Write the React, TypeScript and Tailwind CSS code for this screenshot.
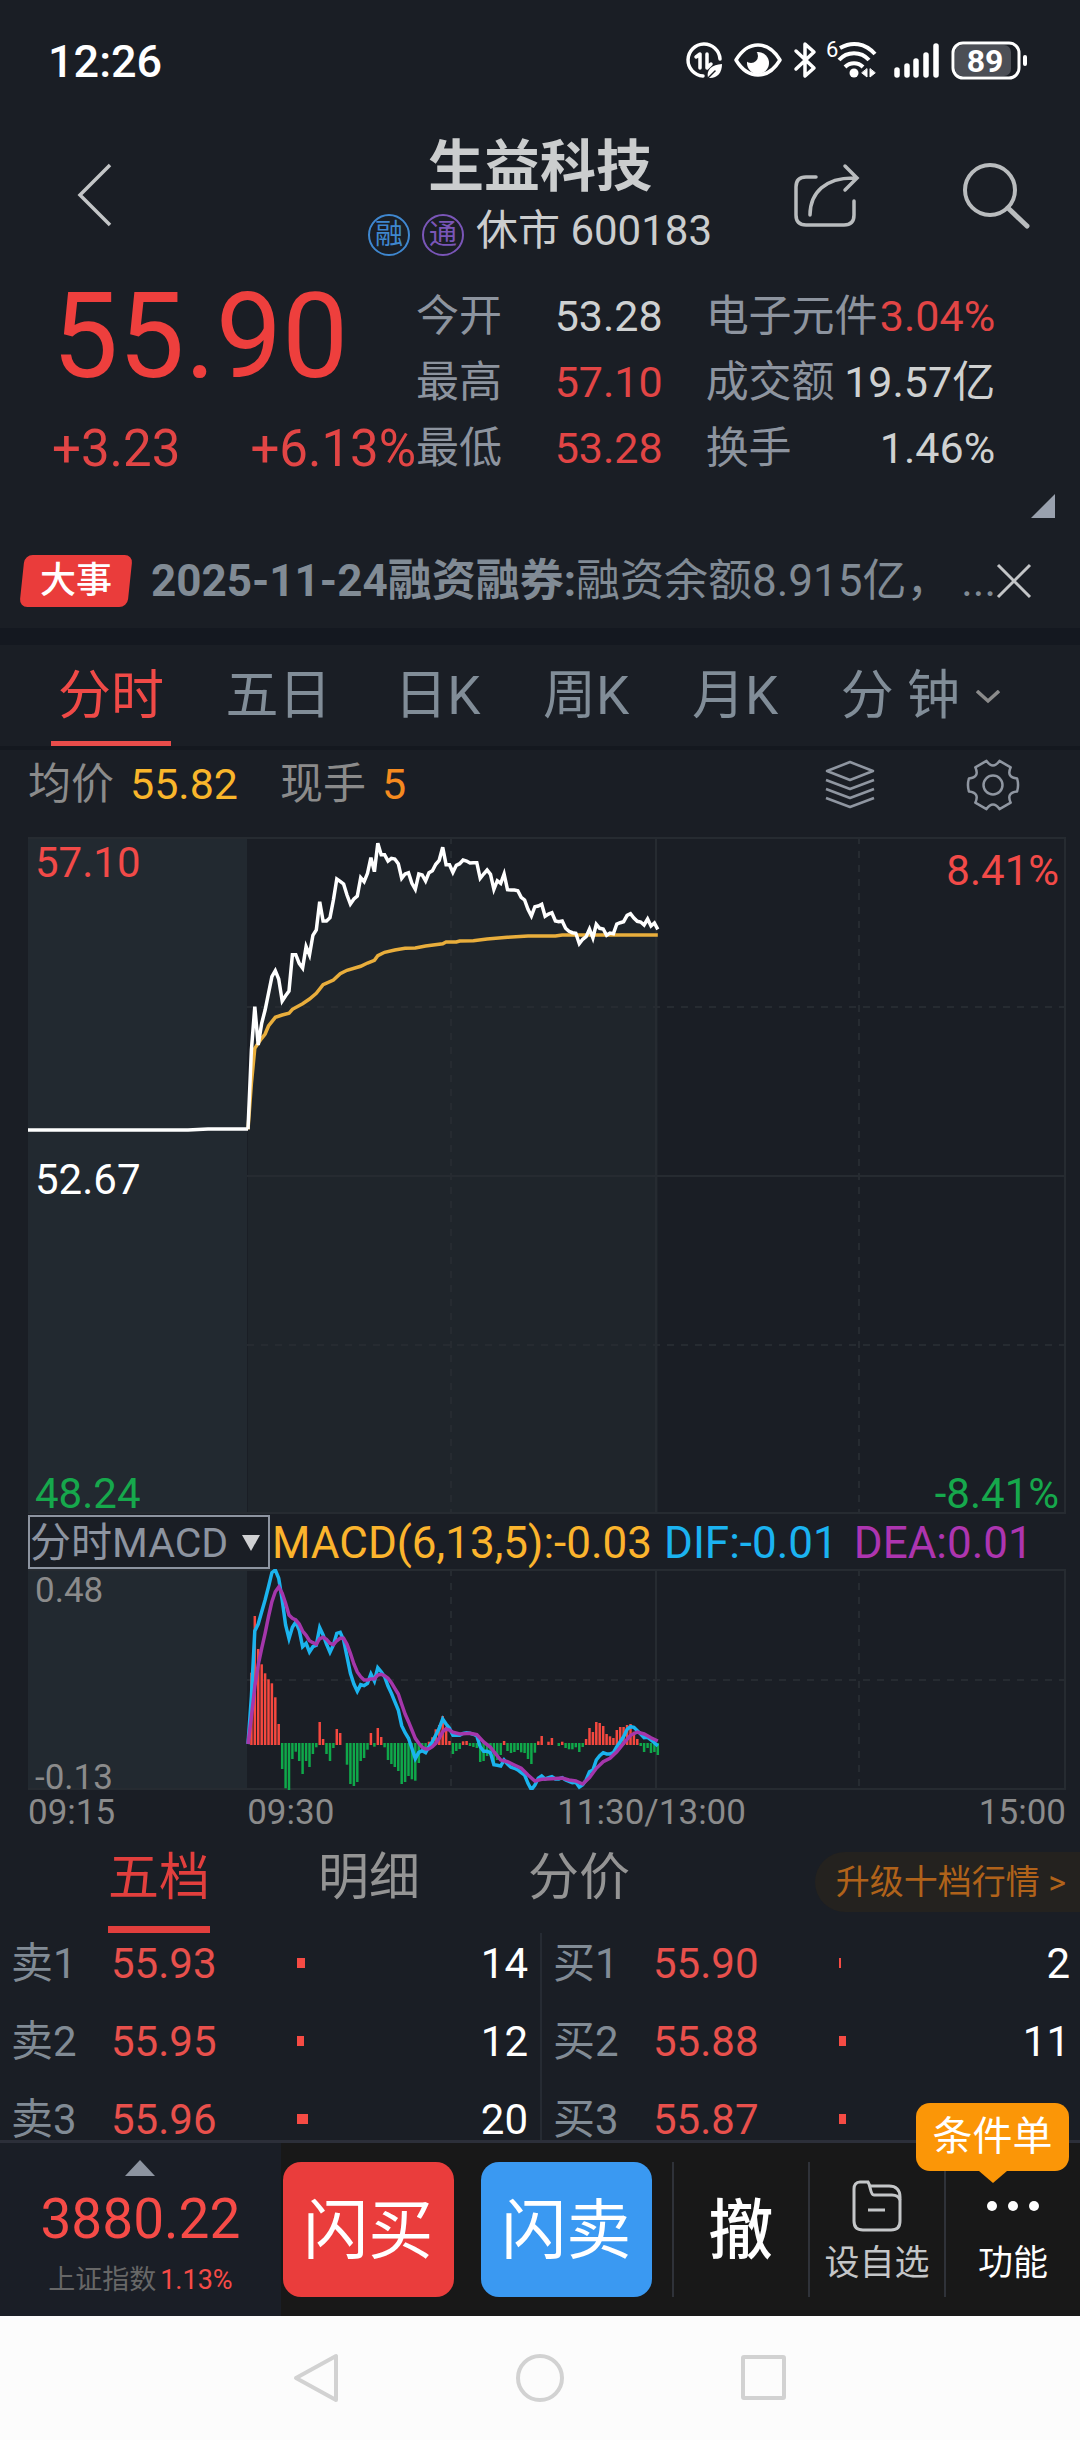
import type { ReactNode } from "react";

type Side = "卖" | "买";

interface Quote {
  level: number;
  price: string;
  volume: string;
  barWidth: number;
}

const stats = [
  { label: "今开", value: "53.28", tone: "text-[#cfd1d1]" },
  { label: "最高", value: "57.10", tone: "text-[#e24545]" },
  { label: "最低", value: "53.28", tone: "text-[#e24545]" },
];

const extraStats = [
  { label: "电子元件", value: "3.04%", tone: "text-[#e24545]" },
  { label: "成交额", value: "19.57亿", tone: "text-[#cfd1d1]" },
  { label: "换手", value: "1.46%", tone: "text-[#cfd1d1]" },
];

const sells: Quote[] = [
  { level: 1, price: "55.93", volume: "14", barWidth: 8 },
  { level: 2, price: "55.95", volume: "12", barWidth: 7 },
  { level: 3, price: "55.96", volume: "20", barWidth: 11 },
];

const buys: Quote[] = [
  { level: 1, price: "55.90", volume: "2", barWidth: 2 },
  { level: 2, price: "55.88", volume: "11", barWidth: 7 },
  { level: 3, price: "55.87", volume: "", barWidth: 7 },
];

// One value per minute from 09:30, in thirds of a chart unit from the top.
const priceSeries = [
  898, 660, 530, 645, 580, 540, 490, 440, 422, 447, 513, 497, 483, 374, 374, 400, 414, 350, 375, 316,
  300, 215, 273, 273, 263, 210, 147, 154, 162, 195, 222, 207, 198, 143, 155, 130, 83, 125, 40, 74,
  74, 93, 85, 87, 101, 145, 132, 128, 160, 178, 132, 135, 153, 128, 122, 103, 91, 52, 104, 104,
  127, 106, 101, 90, 93, 99, 98, 98, 145, 132, 120, 133, 178, 152, 160, 132, 179, 180, 180, 182,
  202, 210, 238, 258, 230, 228, 223, 259, 252, 248, 273, 275, 273, 295, 304, 308, 310, 341, 328, 320,
  297, 324, 283, 295, 297, 316, 309, 311, 282, 278, 275, 256, 251, 264, 274, 276, 285, 267, 288, 279,
  298,
];

const barSeries = [
  582, 368, 198, 297, 343, 370, 388, 400, 442, 522, 657, 715, 723, 627, 605, 633, 672, 633, 651, 612,
  592, 516, 567, 612, 633, 594, 537, 549, 582, 644, 702, 708, 696, 633, 624, 599, 549, 590, 534, 561,
  592, 630, 642, 651, 663, 702, 696, 678, 688, 692, 639, 607, 610, 575, 562, 538, 525, 498, 530, 573,
  612, 603, 597, 574, 573, 588, 591, 594, 636, 633, 618, 615, 640, 630, 615, 573, 603, 609, 606, 600,
  607, 609, 627, 642, 608, 574, 558, 582, 575, 564, 582, 588, 575, 594, 598, 598, 592, 606, 591, 567,
  534, 546, 516, 519, 528, 552, 559, 564, 540, 531, 531, 525, 522, 545, 567, 588, 606, 594, 609, 606,
  615,
];

const difSeries = [
  582, 440, 243, 222, 185, 150, 110, 68, 60, 85, 150, 225, 266, 232, 216, 240, 290, 280, 306, 290,
  286, 233, 255, 282, 307, 285, 250, 247, 270, 320, 370, 402, 424, 404, 407, 400, 372, 393, 353, 365,
  380, 408, 430, 455, 480, 527, 548, 565, 595, 626, 607, 602, 608, 590, 575, 555, 535, 507, 522, 535,
  556, 556, 556, 550, 548, 550, 553, 558, 590, 604, 604, 608, 644, 646, 648, 630, 642, 652, 655, 660,
  668, 675, 700, 719, 705, 685, 678, 687, 683, 680, 687, 687, 683, 690, 694, 698, 697, 711, 704, 690,
  665, 660, 630, 617, 608, 612, 612, 608, 590, 575, 560, 538, 530, 532, 542, 552, 563, 562, 570, 578,
  588,
];

// [minute, level] pairs for the slow-moving lines
const averageLine: [number, number][] = [
  [0, 898], [1, 760], [2, 655], [3, 640], [4, 625], [5, 612], [6, 588], [8, 562], [10, 555], [12, 550],
  [13, 538], [16, 521], [18, 507], [20, 490], [22, 464], [25, 450], [27, 431], [29, 421], [33, 409],
  [35, 399], [37, 391], [38, 377], [40, 367], [43, 360], [46, 355], [49, 354], [52, 348], [57, 341],
  [58, 336], [61, 336], [62, 333], [66, 332], [70, 327], [76, 322], [82, 318], [90, 318], [92, 315],
  [120, 315],
];

const deaLine: [number, number][] = [
  [0, 582], [1, 500], [2, 410], [3, 345], [4, 295], [5, 250], [6, 200], [7, 155], [8, 125], [9, 111],
  [10, 130], [11, 160], [12, 195], [13, 205], [14, 210], [15, 222], [16, 243], [17, 256], [18, 272],
  [19, 278], [20, 283], [21, 266], [22, 262], [23, 268], [24, 280], [25, 284], [26, 272], [27, 265],
  [28, 265], [29, 283], [30, 310], [31, 342], [32, 366], [33, 380], [34, 390], [35, 390], [36, 387],
  [37, 386], [38, 375], [39, 373], [40, 377], [41, 385], [42, 398], [43, 415], [44, 432], [45, 463],
  [46, 492], [47, 515], [48, 540], [49, 565], [50, 580], [51, 592], [52, 597], [53, 596], [54, 590],
  [55, 580], [56, 565], [57, 545], [58, 537], [59, 540], [60, 547], [62, 552], [65, 550], [67, 554],
  [69, 576], [71, 592], [72, 605], [74, 630], [76, 635], [78, 645], [80, 655], [82, 675], [84, 693],
  [86, 688], [89, 686], [92, 684], [94, 690], [96, 693], [98, 702], [100, 683], [102, 655], [104, 635],
  [106, 625], [108, 605], [110, 580], [112, 556], [114, 546], [116, 552], [118, 563], [120, 573],
];

const minuteX = (i: number) => 220 + i * 3.415;

function toPoints(pairs: [number, number][], offset: number) {
  return pairs.map(([i, v]) => `${minuteX(i).toFixed(1)},${(v / 3 - offset).toFixed(1)}`).join(" ");
}

function indexed(series: number[]) {
  return series.map((v, i): [number, number] => [i, v]);
}

function StatusBar() {
  return (
    <div className="flex h-[124px] items-center justify-between pr-[50px] pl-[48px] text-white">
      <span className="text-[45px] font-medium">12:26</span>
      <svg className="h-[44px] w-[346px]" viewBox="0 0 346 44" fill="none" stroke="#fff" strokeWidth="3.5" strokeLinecap="round" strokeLinejoin="round">
        {/* data saver */}
        <path d="M19 36A16 16 0 1 1 36 19" />
        <path d="M12 17l4-3v14M23 14v14l4-4" strokeWidth="3.5" />
        <path d="M24 38c-2-9 4-13 14-14 0 9-5 15-14 14z" fill="#fff" stroke="none" />
        <path d="M23 39l8-8" stroke="#1a1e25" strokeWidth="1.5" />
        {/* eye */}
        <path d="M52 20C64 0 84 0 96 20 84 40 64 40 52 20z" />
        <circle cx="74" cy="23" r="11" fill="#fff" stroke="none" />
        <circle cx="67" cy="16" r="7" fill="#1a1e25" stroke="none" />
        {/* bluetooth */}
        <path d="M112 11l18 17-9 8V4l9 8-18 17" />
        {/* wifi */}
        <text x="142" y="17" fontSize="22" fill="#fff" stroke="none">6</text>
        <path d="M156 8c12-7 25-5 35 6M155 20c8-9 22-9 30 0M161 27c5-5 13-5 18 0" strokeLinecap="butt" strokeWidth="4" />
        <circle cx="170" cy="33" r="4.5" fill="#fff" stroke="none" />
        <path d="M183 29v8l-5-4zM186 29v8l5-4z" fill="#fff" strokeWidth="1" />
        {/* signal */}
        <path d="M213 30v5M223 26v9M232 21v14M242 15v20M252 6v29" strokeWidth="5.5" />
        {/* battery */}
        <rect x="271" y="5" width="56" height="31" rx="7" fill="#4c4f56" stroke="none" />
        <rect x="269" y="3" width="66" height="35" rx="10" strokeWidth="3" />
        <path d="M341 17v7" strokeWidth="4" />
        <text x="301" y="32" fontSize="32" fontWeight="700" fill="#fff" stroke="none" textAnchor="middle">89</text>
      </svg>
    </div>
  );
}

function Header() {
  return (
    <header className="flex h-[142px] items-center">
      <div className="flex w-1/4 pl-[76px]">
        <button type="button" aria-label="返回">
          <svg className="h-[66px] w-[38px]" viewBox="0 0 38 66" fill="none" stroke="#c3c5c7" strokeWidth="3.5">
            <path d="M34 3L4 33l30 30" />
          </svg>
        </button>
      </div>
      <div className="flex w-1/2 flex-col items-center">
        <h1 className="text-[56px] leading-[72px] font-bold text-[#cbcdce]">生益科技</h1>
        <p className="flex items-center gap-[12px] text-[42px] leading-[56px] text-[#cbcdce]">
          <span className="mt-[8px] flex size-[42px] items-center justify-center rounded-full border-2 border-[#3f87cf] text-[28px] text-[#3f87cf]">融</span>
          <span className="mt-[8px] flex size-[42px] items-center justify-center rounded-full border-2 border-[#7a56b8] text-[28px] text-[#7a56b8]">通</span>
          <span>休市 600183</span>
        </p>
      </div>
      <div className="flex w-1/4 items-center justify-end gap-[100px] pr-[48px]">
        <button type="button" aria-label="分享">
          <svg className="size-[70px]" viewBox="0 0 70 70" fill="none" stroke="#b9bcbe" strokeWidth="3.5" strokeLinecap="round">
            <path d="M24 17H14c-7 0-10 4-10 10v28c0 6 3 10 10 10h38c7 0 10-4 10-10V41" />
            <path d="M18 55c0-22 15-38 46-37M53 6l12 12-12 12" />
          </svg>
        </button>
        <button type="button" aria-label="搜索">
          <svg className="size-[70px]" viewBox="0 0 70 70" fill="none" stroke="#b9bcbe" strokeWidth="4" strokeLinecap="round">
            <circle cx="28" cy="30" r="25" />
            <path d="M46 48l19 18" strokeWidth="5" />
          </svg>
        </button>
      </div>
    </header>
  );
}

function Summary() {
  return (
    <section className="grid h-[256px] grid-cols-[415fr_247fr_43fr_290fr_85fr] text-[43px] leading-[66px]">
      <div className="pl-[52px] text-[#ee3f3d]">
        <div className="mt-[10px] h-[122px] text-[118px] leading-[122px]">55.90</div>
        <div className="mt-[18px] flex gap-[70px] text-[51px] leading-[66px] whitespace-nowrap text-[#e24545]">
          <span>+3.23</span>
          <span>+6.13%</span>
        </div>
      </div>
      <dl className="mt-[17px]">
        {stats.map((s) => (
          <div key={s.label} className="flex justify-between">
            <dt className="text-[#8d949f]">{s.label}</dt>
            <dd className={s.tone}>{s.value}</dd>
          </div>
        ))}
      </dl>
      <span />
      <dl className="mt-[17px] whitespace-nowrap">
        {extraStats.map((s) => (
          <div key={s.label} className="flex justify-between">
            <dt className="text-[#8d949f]">{s.label}</dt>
            <dd className={s.tone}>{s.value}</dd>
          </div>
        ))}
      </dl>
      <div className="flex items-end justify-end pr-[25px] pb-[4px]">
        <svg className="size-[24px]" viewBox="0 0 24 24">
          <path d="M24 0v24H0z" fill="#99a1ae" />
        </svg>
      </div>
    </section>
  );
}

function NewsBar() {
  return (
    <section className="flex h-[106px] items-center pt-[12px] pr-[48px] pl-[22px] text-[44px] text-[#818b95]">
      <span className="mr-[21px] flex h-[52px] w-[108px] shrink-0 -skew-x-6 items-center justify-center rounded-[8px] bg-[#ea3c3b]">
        <span className="skew-x-6 text-[36px] font-medium text-white">大事</span>
      </span>
      <a href="#news" className="flex flex-1 whitespace-nowrap">
        <b>2025-11-24融资融券:</b>
        <span>融资余额8.915亿，</span>
        <span className="ml-auto">...</span>
      </a>
      <button type="button" aria-label="关闭" className="shrink-0">
        <svg className="size-[36px]" viewBox="0 0 36 36" stroke="#c3c5c7" strokeWidth="3">
          <path d="M2 2l32 32M34 2L2 34" />
        </svg>
      </button>
    </section>
  );
}

function PeriodTabs() {
  const tab = "border-b-[5px] pt-[7px]";
  return (
    <nav className="flex h-[105px] items-stretch justify-between border-b-4 border-[#14181f] pr-[80px] pl-[51px] text-[53px] text-[#818d98]">
      <button type="button" className={`${tab} -mr-[8px] border-[#e84c4a] px-[7px] text-[#f04a47]`}>分时</button>
      <button type="button" className={`${tab} border-transparent`}>五日</button>
      <button type="button" className={`${tab} border-transparent`}>日K</button>
      <button type="button" className={`${tab} border-transparent`}>周K</button>
      <button type="button" className={`${tab} border-transparent`}>月K</button>
      <button type="button" className={`${tab} flex items-center gap-[16px] border-transparent`}>
        分 钟
        <svg className="h-[14px] w-[24px]" viewBox="0 0 24 14" fill="none" stroke="#8b8b8b" strokeWidth="3.5">
          <path d="M1 1l11 10L23 1" />
        </svg>
      </button>
    </nav>
  );
}

function ChartToolbar() {
  return (
    <div className="flex h-[87px] items-center pr-[60px] pb-[18px] pl-[28px] text-[43px] text-[#8b8b8b]">
      <span>均价</span>
      <span className="ml-[16px] text-[#f9b62b]">55.82</span>
      <span className="ml-[42px]">现手</span>
      <span className="ml-[16px] text-[#f58a1f]">5</span>
      <button type="button" aria-label="叠加" className="ml-auto">
        <svg className="h-[50px] w-[52px]" viewBox="0 0 52 50" fill="none" stroke="#8f96a1" strokeWidth="2.5" strokeLinejoin="round">
          <path d="M26 2l23 9-23 9-23-9zM2 20l24 9 24-9M2 29l24 9 24-9M2 38l24 9 24-9" />
        </svg>
      </button>
      <button type="button" aria-label="设置" className="ml-[90px]">
        <svg className="size-[54px]" viewBox="0 0 54 54" fill="none" stroke="#8f96a1" strokeWidth="2.5" strokeLinejoin="round">
          <path d="M20.5 2.9Q27 12 33.5 2.9L44.7 9.3Q40 19.5 51.1 20.5Q53 27 51.1 33.5Q40 34.5 44.7 44.7L33.5 51.1Q27 42 20.5 51.1L9.3 44.7Q14 34.5 2.9 33.5Q1 27 2.9 20.5Q14 19.5 9.3 9.3Z" />
          <circle cx="27" cy="27" r="9.500" />
        </svg>
      </button>
    </div>
  );
}

function PriceChart() {
  const line = toPoints(indexed(priceSeries), 7);
  return (
    <div className="relative mr-[14px] ml-[28px] text-[42px] leading-[48px]">
      <svg className="block h-[677px] w-full" viewBox="0 0 1038 677" preserveAspectRatio="none" fill="none">
        <rect width="219" height="677" fill="#222930" />
        <polygon points={`${line} 630,677 220,677`} fill="#1f252b" />
        <g stroke="#262b31" strokeWidth="2">
          <path d="M0 1h1037v675H0M628 0v677M219 339h818" />
          <path d="M423 0v677M831 0v677M219 170h818M219 508h818" strokeDasharray="7 7" />
        </g>
        <polyline points={toPoints(averageLine, 7)} stroke="#e9ae3c" strokeWidth="3.5" />
        <polyline points={`0,293 160,293 180,292 220,292 ${line}`} stroke="#fff" strokeWidth="3.5" />
      </svg>
      <span className="absolute top-[2px] left-[7px] text-[#f24a48]">57.10</span>
      <span className="absolute top-[10px] right-[7px] text-[#f24a48]">8.41%</span>
      <span className="absolute top-[319px] left-[7px] text-white">52.67</span>
      <span className="absolute bottom-[-4px] left-[7px] text-[#16a84c]">48.24</span>
      <span className="absolute right-[7px] bottom-[-4px] text-[#16a84c]">-8.41%</span>
    </div>
  );
}

function MacdChart() {
  return (
    <>
      <div className="flex h-[55px] items-center pl-[28px] text-[44px] leading-[48px] whitespace-nowrap">
        <button type="button" className="flex h-[54px] w-[242px] items-center justify-between border-2 border-[#8d94a0] pt-[2px] pr-[8px] text-[41px] text-[#8d94a0]">
          分时MACD
          <svg className="h-[16px] w-[18px]" viewBox="0 0 18 16">
            <path d="M0 0h18L9 16z" fill="#d0d1d3" />
          </svg>
        </button>
        <span className="ml-[2px] pt-[3px] text-[#fbb42d]">MACD(6,13,5):-0.03</span>
        <span className="ml-[12px] pt-[3px] text-[#1bb3f1]">DIF:-0.01</span>
        <span className="ml-[16px] pt-[3px] text-[#ad35b0]">DEA:0.01</span>
      </div>
      <div className="relative mr-[14px] ml-[28px] text-[35px] leading-[40px] text-[#8b8b8b]">
        <svg className="block h-[221px] w-full" viewBox="0 0 1038 221" preserveAspectRatio="none" fill="none">
          <rect width="219" height="221" fill="#222930" />
          <g stroke="#262b31" strokeWidth="2">
            <path d="M0 1h1037v219H0M628 0v221" />
            <path d="M423 0v221M831 0v221M219 111h818" strokeDasharray="7 7" />
          </g>
          {barSeries.map((v, i) =>
            v === 582 ? null : (
              <path
                key={i}
                d={`M${minuteX(i).toFixed(1)} ${v < 582 ? 176 : 174}V${(v / 3 - 19).toFixed(1)}`}
                stroke={v < 582 ? "#f5483f" : "#0fa84a"}
                strokeWidth="2.5"
              />
            )
          )}
          <polyline points={toPoints(indexed(difSeries), 19)} stroke="#1bb3ee" strokeWidth="3.5" />
          <polyline points={toPoints(deaLine, 19)} stroke="#a536ab" strokeWidth="3.5" />
        </svg>
        <span className="absolute top-[2px] left-[7px]">0.48</span>
        <span className="absolute bottom-[-8px] left-[7px]">-0.13</span>
      </div>
      <div className="mr-[14px] ml-[28px] grid h-[48px] grid-cols-[219fr_204fr_400fr_214fr] items-center pb-[3px] text-[35px] leading-none text-[#8b8b8b]">
        <span>09:15</span>
        <span>09:30</span>
        <span className="text-center">11:30/13:00</span>
        <span className="text-right">15:00</span>
      </div>
    </>
  );
}

function QuoteTable({ side, rows }: { side: Side; rows: Quote[] }) {
  return (
    <table className="w-full table-fixed text-[42px] leading-[42px]">
      <tbody>
        {rows.map((q) => (
          <tr key={q.level} className="h-[78px] align-top">
            <th scope="row" className="w-[100px] p-0 pt-[10px] text-left font-normal text-[#818b95]">
              {side}
              {q.level}
            </th>
            <td className="w-[186px] p-0 pt-[10px] text-[#e8504c]">{q.price}</td>
            <td className="p-0 pt-[25px]">
              <div className="h-[10px] bg-[#f64b44]" style={{ width: q.barWidth }} />
            </td>
            <td className="w-[120px] p-0 pt-[10px] text-right text-white">{q.volume}</td>
          </tr>
        ))}
      </tbody>
    </table>
  );
}

function OrderBook() {
  return (
    <section className="h-[302px] overflow-hidden">
      <div className="flex h-[95px] items-stretch text-[51px] text-[#949494]">
        <button type="button" className="ml-[108px] border-b-[7px] border-[#e23f3d] pb-[8px] text-[#e23f3d]">五档</button>
        <button type="button" className="ml-[108px] pb-[15px]">明细</button>
        <button type="button" className="ml-[108px] pb-[15px]">分价</button>
        <button type="button" className="mt-[14px] ml-auto h-[60px] rounded-l-full bg-[#24221f] pr-[14px] pl-[21px] text-[34px] text-[#b0621a]">
          升级十档行情 &gt;
        </button>
      </div>
      <div className="flex">
        <div className="flex-1 pr-[12px] pl-[11px]">
          <QuoteTable side="卖" rows={sells} />
        </div>
        <div className="w-[2px] bg-[#262b33]" />
        <div className="flex-1 pr-[10px] pl-[11px]">
          <QuoteTable side="买" rows={buys} />
        </div>
      </div>
    </section>
  );
}

function FooterItem({ label, tone, children }: { label: string; tone: string; children: ReactNode }) {
  return (
    <button type="button" className={`flex h-[135px] flex-1 flex-col items-center border-l-2 border-[#2f3239] pt-[16px] text-[35px] ${tone}`}>
      <span className="flex h-[56px] items-center">{children}</span>
      <span className="leading-[60px]">{label}</span>
    </button>
  );
}

function ActionBar() {
  return (
    <footer className="relative flex h-[176px] items-stretch border-t-[3px] border-[#2c2f39] bg-[#181818]">
      <a href="#index" className="flex w-[26%] flex-col items-center bg-[#1a1e26] pt-[17px] text-[#f64b47]">
        <svg className="h-[16px] w-[30px]" viewBox="0 0 30 16">
          <path d="M15 0l15 16H0z" fill="#8d94a0" />
        </svg>
        <span className="mt-[10px] text-[55px] leading-[66px]">3880.22</span>
        <span className="mt-[6px] flex gap-[4px] text-[27px] leading-[44px]">
          <span className="text-[#676767]">上证指数</span>1.13%
        </span>
      </a>
      <div className="flex flex-1 items-center text-white">
        <button type="button" className="ml-[2px] h-[135px] w-[171px] rounded-[18px] bg-[#ea3d3c] pt-[5px] text-[65px]">闪买</button>
        <button type="button" className="ml-[27px] h-[135px] w-[171px] rounded-[18px] bg-[#3a99f2] pt-[5px] text-[65px]">闪卖</button>
        <button type="button" className="ml-[20px] h-[135px] flex-1 border-l-2 border-[#2f3239] pt-[5px] text-[65px] font-medium">撤</button>
        <FooterItem label="设自选" tone="text-[#c4c6c8]">
          <svg className="h-[52px] w-[50px]" viewBox="0 0 50 52" fill="none" stroke="#c4c6c8" strokeWidth="3">
            <path d="M17 2H8C4 2 2 5 2 9v32c0 6 3 9 9 9h28c6 0 9-3 9-9V17c0-7-4-11-11-11H18" />
            <path d="M16 2c3 4 2 13 6 13h18c4 0 7 2 8 5M16 30h17" />
          </svg>
        </FooterItem>
        <FooterItem label="功能" tone="text-white">
          <svg className="h-[12px] w-[52px]" viewBox="0 0 52 12" fill="#fff">
            <circle cx="5" cy="6" r="5" />
            <circle cx="26" cy="6" r="5" />
            <circle cx="47" cy="6" r="5" />
          </svg>
        </FooterItem>
      </div>
      <div className="absolute top-[-40px] right-[11px] flex flex-col items-center">
        <span className="flex h-[68px] w-[153px] items-center justify-center rounded-[14px] bg-[#fb9607] text-[40px] text-white">条件单</span>
        <svg className="h-[12px] w-[28px]" viewBox="0 0 28 12">
          <path d="M0 0h28L14 12z" fill="#fb9607" />
        </svg>
      </div>
    </footer>
  );
}

function SystemNav() {
  return (
    <nav className="flex h-[124px] items-center justify-center gap-[174px] bg-[#fcfcfc]">
      <button type="button" aria-label="后退">
        <svg className="size-[50px]" viewBox="0 0 50 50" fill="none" stroke="#d2d2d2" strokeWidth="4" strokeLinejoin="round">
          <path d="M45 3v44L5 25z" />
        </svg>
      </button>
      <button type="button" aria-label="主屏幕">
        <svg className="size-[50px]" viewBox="0 0 50 50" fill="none" stroke="#d2d2d2" strokeWidth="4">
          <circle cx="25" cy="25" r="22" />
        </svg>
      </button>
      <button type="button" aria-label="最近任务">
        <svg className="size-[50px]" viewBox="0 0 50 50" fill="none" stroke="#d2d2d2" strokeWidth="4" strokeLinejoin="round">
          <rect x="4" y="4" width="41" height="41" rx="1" />
        </svg>
      </button>
    </nav>
  );
}

export default function App() {
  return (
    <div className="w-full overflow-hidden bg-[#1a1e25] font-[Roboto,'Noto_Sans_CJK_SC',sans-serif]">
      <StatusBar />
      <Header />
      <Summary />
      <NewsBar />
      <div className="h-[17px] bg-[#141820]" />
      <PeriodTabs />
      <ChartToolbar />
      <PriceChart />
      <MacdChart />
      <OrderBook />
      <ActionBar />
      <SystemNav />
    </div>
  );
}
